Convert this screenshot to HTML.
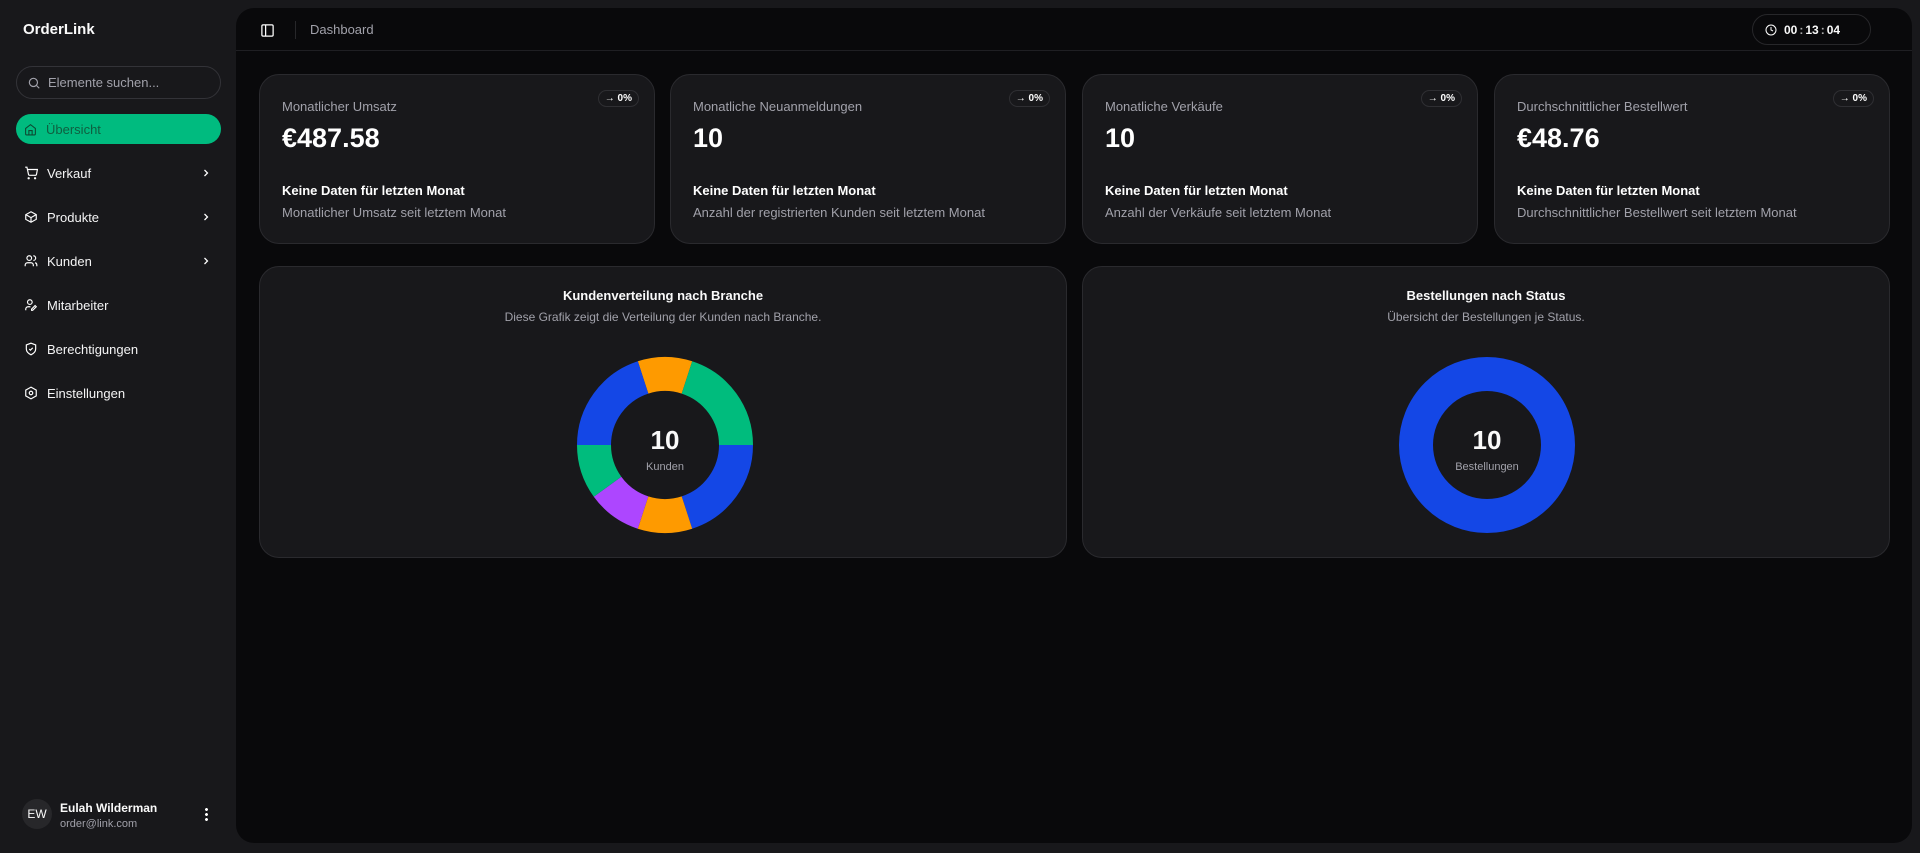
<!DOCTYPE html>
<html><head><meta charset="utf-8"><style>
*{box-sizing:border-box;margin:0;padding:0}
body{width:1920px;height:853px;background:#18181b;font-family:"Liberation Sans",Arial,sans-serif;color:#fafafa;position:relative;overflow:hidden}
.a{position:absolute}
.nav{position:absolute;left:16px;width:205px;height:30px;display:flex;align-items:center;font-size:13px;color:#f4f4f5}
.nav svg{margin-left:8px;margin-right:9px}
.nav svg.chev{position:absolute;right:9px;top:9px;margin:0}
.main{position:absolute;left:236px;top:8px;width:1676px;height:835px;background:#09090b;border-radius:18px}
.card{position:absolute;background:#18181b;border:1px solid #2a2a2e;border-radius:20px}
.ct{position:absolute;left:22px;top:24px;font-size:13px;color:#a1a1aa}
.cv{position:absolute;left:22px;top:48px;font-size:27px;font-weight:bold;color:#fff}
.cb{position:absolute;left:22px;top:108px;font-size:13px;font-weight:bold;color:#fff}
.cs{position:absolute;left:22px;top:130px;font-size:13px;color:#a1a1aa}
.badge{position:absolute;right:15px;top:15px;height:17px;padding:0 6px;border:1px solid #2f2f33;border-radius:9px;font-size:10px;font-weight:bold;line-height:15px;color:#fff}
.h{position:absolute;left:0;width:100%;text-align:center}
</style></head><body>
<div class="a" style="left:23px;top:21px;font-size:15px;font-weight:bold">OrderLink</div>
<div class="a" style="left:16px;top:66px;width:205px;height:33px;border:1px solid #333338;border-radius:17px;display:flex;align-items:center;font-size:13px;color:#a1a1aa">
<svg style="margin:0 7px 0 10px" width="14" height="14" viewBox="0 0 24 24" fill="none" stroke="#a1a1aa" stroke-width="2"><circle cx="11" cy="11" r="7"/><path d="M21 21l-4.5-4.5"/></svg>Elemente suchen...</div>
<div class="nav" style="top:114px;background:#00bb7f;border-radius:15px;color:#e6fff4"><svg width="13" height="13" viewBox="0 0 24 24" fill="none" stroke="#0c4a32" stroke-width="2"><path d="M3 10l9-7 9 7v10a2 2 0 0 1-2 2H5a2 2 0 0 1-2-2z"/><path d="M9 22v-8h6v8"/></svg><span style="color:#0f5f40">Übersicht</span></div>
<div class="nav" style="top:158px"><svg width="14" height="14" viewBox="0 0 24 24" fill="none" stroke="#fff" stroke-width="2"><circle cx="8" cy="21" r="1"/><circle cx="19" cy="21" r="1"/><path d="M2 2h3l2.7 12.4a2 2 0 0 0 2 1.6h9.7a2 2 0 0 0 2-1.6L23 6H6"/></svg>Verkauf<svg class="chev" width="12" height="12" viewBox="0 0 24 24" fill="none" stroke="#fff" stroke-width="2.5"><path d="M9 6l6 6-6 6"/></svg></div>
<div class="nav" style="top:202px"><svg width="14" height="14" viewBox="0 0 24 24" fill="none" stroke="#fff" stroke-width="2"><path d="M21 8l-9-5-9 5v8l9 5 9-5z"/><path d="M3 8l9 5 9-5M12 13v8"/></svg>Produkte<svg class="chev" width="12" height="12" viewBox="0 0 24 24" fill="none" stroke="#fff" stroke-width="2.5"><path d="M9 6l6 6-6 6"/></svg></div>
<div class="nav" style="top:246px"><svg width="14" height="14" viewBox="0 0 24 24" fill="none" stroke="#fff" stroke-width="2"><circle cx="9" cy="7" r="4"/><path d="M2 21v-2a4 4 0 0 1 4-4h6a4 4 0 0 1 4 4v2M16 3a4 4 0 0 1 0 8M22 21v-2a4 4 0 0 0-3-4"/></svg>Kunden<svg class="chev" width="12" height="12" viewBox="0 0 24 24" fill="none" stroke="#fff" stroke-width="2.5"><path d="M9 6l6 6-6 6"/></svg></div>
<div class="nav" style="top:290px"><svg width="14" height="14" viewBox="0 0 24 24" fill="none" stroke="#fff" stroke-width="2"><circle cx="10" cy="7" r="4"/><path d="M3 21v-2a4 4 0 0 1 4-4h4M15 21l6-6-2-2-6 6v2z"/></svg>Mitarbeiter</div>
<div class="nav" style="top:334px"><svg width="14" height="14" viewBox="0 0 24 24" fill="none" stroke="#fff" stroke-width="2"><path d="M12 2l8 3v7c0 5-4 8-8 10-4-2-8-5-8-10V5z"/><path d="M9 12l2 2 4-4"/></svg>Berechtigungen</div>
<div class="nav" style="top:378px"><svg width="14" height="14" viewBox="0 0 24 24" fill="none" stroke="#fff" stroke-width="2"><path d="M12 2l9 5v10l-9 5-9-5V7z"/><circle cx="12" cy="12" r="3"/></svg>Einstellungen</div>
<div class="a" style="left:22px;top:799px;width:30px;height:30px;border-radius:50%;background:#27272a;font-size:12px;line-height:30px;text-align:center">EW</div>
<div class="a" style="left:60px;top:801px;font-size:12px;font-weight:bold">Eulah Wilderman</div>
<div class="a" style="left:60px;top:818px;font-size:11px;color:#a1a1aa">order@link.com</div>
<div class="a" style="left:205px;top:807px;width:3px;height:14px;background:radial-gradient(circle,#fff 1.3px,transparent 1.6px) 0 0/3px 5px"></div>

<div class="main">
<svg class="a" style="left:24px;top:15px" width="15" height="15" viewBox="0 0 24 24" fill="none" stroke="#fff" stroke-width="2"><rect x="3" y="3" width="18" height="18" rx="2"/><path d="M9 3v18"/></svg>
<div class="a" style="left:59px;top:13px;width:1px;height:18px;background:#27272a"></div>
<div class="a" style="left:74px;top:14px;font-size:13px;color:#a1a1aa">Dashboard</div>
<div class="a" style="left:1516px;top:6px;width:119px;height:31px;border:1px solid #27272a;border-radius:16px;font-size:12px;font-weight:bold;display:flex;align-items:center"><svg style="margin:0 7px 0 12px" width="12" height="12" viewBox="0 0 24 24" fill="none" stroke="#fff" stroke-width="2"><circle cx="12" cy="12" r="10"/><path d="M12 6v6l4 2"/></svg>00<span style="margin:0 2px;color:#aaa">:</span>13<span style="margin:0 2px;color:#aaa">:</span>04</div>
<div class="a" style="left:0;top:42px;width:100%;height:1px;background:#1f1f23"></div>

<div class="card" style="left:23px;top:66px;width:396px;height:170px"><div class="badge">→ 0%</div><div class="ct">Monatlicher Umsatz</div><div class="cv">€487.58</div><div class="cb">Keine Daten für letzten Monat</div><div class="cs">Monatlicher Umsatz seit letztem Monat</div></div>
<div class="card" style="left:434px;top:66px;width:396px;height:170px"><div class="badge">→ 0%</div><div class="ct">Monatliche Neuanmeldungen</div><div class="cv">10</div><div class="cb">Keine Daten für letzten Monat</div><div class="cs">Anzahl der registrierten Kunden seit letztem Monat</div></div>
<div class="card" style="left:846px;top:66px;width:396px;height:170px"><div class="badge">→ 0%</div><div class="ct">Monatliche Verkäufe</div><div class="cv">10</div><div class="cb">Keine Daten für letzten Monat</div><div class="cs">Anzahl der Verkäufe seit letztem Monat</div></div>
<div class="card" style="left:1258px;top:66px;width:396px;height:170px"><div class="badge">→ 0%</div><div class="ct">Durchschnittlicher Bestellwert</div><div class="cv">€48.76</div><div class="cb">Keine Daten für letzten Monat</div><div class="cs">Durchschnittlicher Bestellwert seit letztem Monat</div></div>

<div class="card" style="left:23px;top:258px;width:808px;height:292px">
<div class="h" style="top:21px;font-size:13px;font-weight:bold">Kundenverteilung nach Branche</div>
<div class="h" style="top:43px;font-size:12px;color:#a1a1aa">Diese Grafik zeigt die Verteilung der Kunden nach Branche.</div>
<svg class="a" style="left:315px;top:88px" width="180" height="180" viewBox="-90 -90 180 180">
<g fill="none" stroke-width="34">
<circle r="71" stroke="#fe9a00" stroke-dasharray="44.61 446.1" transform="rotate(-108)"/>
<circle r="71" stroke="#00bc7d" stroke-dasharray="89.22 446.1" transform="rotate(-72)"/>
<circle r="71" stroke="#1447e6" stroke-dasharray="89.22 446.1" transform="rotate(0)"/>
<circle r="71" stroke="#fe9a00" stroke-dasharray="44.61 446.1" transform="rotate(72)"/>
<circle r="71" stroke="#ad46ff" stroke-dasharray="44.61 446.1" transform="rotate(108)"/>
<circle r="71" stroke="#00bc7d" stroke-dasharray="44.61 446.1" transform="rotate(144)"/>
<circle r="71" stroke="#1447e6" stroke-dasharray="89.22 446.1" transform="rotate(180)"/>
</g></svg>
<div class="a" style="left:315px;top:158px;width:180px;text-align:center;font-size:26px;font-weight:bold">10</div>
<div class="a" style="left:315px;top:194px;width:180px;text-align:center;font-size:11px;color:#a1a1aa">Kunden</div>
</div>
<div class="card" style="left:846px;top:258px;width:808px;height:292px">
<div class="h" style="top:21px;font-size:13px;font-weight:bold">Bestellungen nach Status</div>
<div class="h" style="top:43px;font-size:12px;color:#a1a1aa">Übersicht der Bestellungen je Status.</div>
<svg class="a" style="left:314px;top:88px" width="180" height="180" viewBox="-90 -90 180 180"><circle r="71" fill="none" stroke="#1447e6" stroke-width="34"/></svg>
<div class="a" style="left:314px;top:158px;width:180px;text-align:center;font-size:26px;font-weight:bold">10</div>
<div class="a" style="left:314px;top:194px;width:180px;text-align:center;font-size:11px;color:#a1a1aa">Bestellungen</div>
</div>
</div>
</body></html>
